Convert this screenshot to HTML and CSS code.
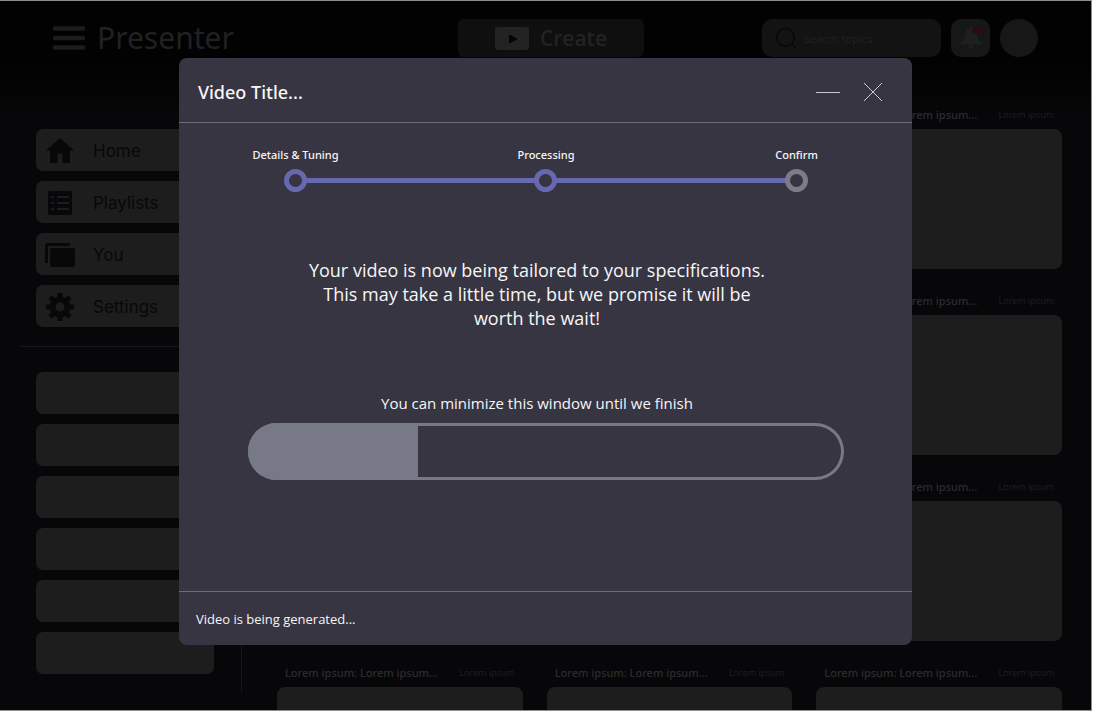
FILE: index.html
```html
<!DOCTYPE html>
<html lang="en">
<head>
    <meta charset="UTF-8">
    <meta name="viewport" content="width=device-width, initial-scale=1.0">
    <title>Presenter</title>
    <link rel="stylesheet" href="styles.css">
</head>
<body>
    <div class="app">
        <header class="topbar">
            <div class="brand">
                <button class="menu-button" aria-label="Menu">
                    <svg width="34" height="24" viewBox="0 0 34 24" stroke="currentColor" stroke-width="4.6" stroke-linecap="round">
                        <path d="M3 2.500h28M3 12h28M3 21.500h28"/>
                    </svg>
                </button>
                <h1>Presenter</h1>
            </div>
            <button class="create-button">
                <svg width="34" height="23" viewBox="0 0 34 23">
                    <rect width="34" height="23" rx="3" fill="#232323"/>
                    <path d="M14.500 8l7.500 4-7.500 4z" fill="#050505" stroke="#050505" stroke-linejoin="round"/>
                </svg>
                Create
            </button>
            <div class="tools">
                <label class="search">
                    <svg width="20" height="20" viewBox="0 0 20 20" fill="none" stroke="#070707" stroke-width="1.3">
                        <circle cx="9.500" cy="9.500" r="8.800"/>
                        <path d="M16 16l3.500 3.500"/>
                    </svg>
                    <input type="text" placeholder="Search topics" aria-label="Search topics">
                </label>
                <button class="bell-button" aria-label="Notifications">
                    <svg width="30" height="30" viewBox="0 0 30 30">
                        <path d="M15 3c-1 0-1.600.7-1.600 1.600C10 6 9 10 8.500 13.500c-.5 3-1.500 4.500-4.500 6.500v1.500h22V20c-3-2-4-3.500-4.500-6.500C21 10 20 6 16.600 4.600 16.600 3.700 16 3 15 3zM12.500 23h5a2.500 2.500 0 0 1-5 0z" fill="#1e1f20"/>
                        <rect x="16" y="4" width="14" height="7" rx="3.500" fill="#2b0c10"/>
                    </svg>
                </button>
                <button class="avatar" aria-label="Account"></button>
            </div>
        </header>

        <div class="layout">
            <aside class="sidebar">
                <nav class="nav-list">
                    <a href="#" class="nav-item">
                        <svg width="30" height="30" viewBox="0 0 30 30" fill="currentColor"><path d="M15 2L1 14.500h4V27h7.500v-9.500h5V27H25V14.500h4z"/></svg>
                        Home
                    </a>
                    <a href="#" class="nav-item">
                        <svg width="30" height="30" viewBox="0 0 30 30">
                            <rect x="3" y="3" width="24" height="24" rx="2" fill="currentColor"/>
                            <path d="M6 9h3M12 9h12M6 15h3M12 15h12M6 21h3M12 21h12" stroke="#1d1d1d" stroke-width="2"/>
                        </svg>
                        Playlists
                    </a>
                    <a href="#" class="nav-item">
                        <svg width="30" height="30" viewBox="0 0 30 30" fill="currentColor">
                            <path d="M0 5a2 2 0 0 1 2-2h23v3H3v17H0z"/>
                            <rect x="5" y="8" width="25" height="19" rx="2"/>
                        </svg>
                        You
                    </a>
                    <a href="#" class="nav-item">
                        <svg width="30" height="30" viewBox="0 0 30 30">
                            <circle cx="15" cy="15" r="7.500" fill="none" stroke="currentColor" stroke-width="6"/>
                            <path d="M15 1v6M15 23v6M1 15h6M23 15h6M5.100 5.100l4.200 4.200M20.700 20.700l4.200 4.200M5.100 24.900l4.200-4.200M20.700 9.300l4.200-4.200" stroke="currentColor" stroke-width="5"/>
                        </svg>
                        Settings
                    </a>
                </nav>
                <div class="nav-list channels">
                    <a href="#" class="nav-item" aria-label="Channel 1"></a>
                    <a href="#" class="nav-item" aria-label="Channel 2"></a>
                    <a href="#" class="nav-item" aria-label="Channel 3"></a>
                    <a href="#" class="nav-item" aria-label="Channel 4"></a>
                    <a href="#" class="nav-item" aria-label="Channel 5"></a>
                    <a href="#" class="nav-item" aria-label="Channel 6"></a>
                </div>
            </aside>

            <main class="video-grid" id="video-grid"></main>
        </div>

        <div class="overlay">
            <section class="modal" role="dialog" aria-labelledby="modal-title">
                <header class="modal-header">
                    <h2 id="modal-title">Video Title...</h2>
                    <div class="window-controls">
                        <button aria-label="Minimize">
                            <svg width="26" height="20" viewBox="0 0 26 20" stroke="currentColor"><path d="M1 10.500h24"/></svg>
                        </button>
                        <button aria-label="Close">
                            <svg width="20" height="20" viewBox="0 0 20 20" stroke="currentColor"><path d="M1 1l18 18M19 1L1 19"/></svg>
                        </button>
                    </div>
                </header>

                <div class="modal-body">
                    <ol class="steps">
                        <li class="step done">Details &amp; Tuning</li>
                        <li class="step done">Processing</li>
                        <li class="step">Confirm</li>
                    </ol>
                    <div class="messages">
                        <p class="message">Your video is now being tailored to your specifications. This may take a little time, but we promise it will be worth the wait!</p>
                        <label class="hint" for="generation">You can minimize this window until we finish</label>
                    </div>
                    <progress class="progress" id="generation" value="28.5" max="100"></progress>
                </div>

                <footer class="modal-footer">Video is being generated...</footer>
            </section>
        </div>
    </div>

    <script>
        const grid = document.getElementById('video-grid');

        for (let i = 0; i < 12; i++) {
            const card = document.createElement('article');
            // the modal lies over the first two columns of the top three rows
            const covered = i < 9 && i % 3 !== 2;
            card.className = 'video-card';
            card.innerHTML = `
                <div class="video-info">
                    ${covered ? '' : '<h3>Lorem ipsum: Lorem ipsum...</h3><span>Lorem ipsum</span>'}
                </div>
                <div class="thumbnail"></div>`;
            grid.appendChild(card);
        }
    </script>
</body>
</html>
```

FILE: styles.css
```css
*, *::before, *::after {
    box-sizing: border-box;
}
body {
    margin: 0;
    background-color: white;
    font-family: 'Open Sans', sans-serif;
}
h1, h2, h3, p, ol {
    margin: 0;
    padding: 0;
    font-weight: 400;
}
h1, h2, h3, .step {
    font-family: 'Noto Sans', sans-serif;
}
button {
    display: flex;
    align-items: center;
    justify-content: center;
    padding: 0;
    border: none;
    background: none;
    color: inherit;
    font-family: inherit;
    cursor: pointer;
}
svg {
    display: block;
    flex-shrink: 0;
}
.app {
    position: relative;
    height: calc(100vh - 3px);
    margin-right: 2px;
    overflow: hidden;
    border: 1px solid #8e8e90;
    border-left: none;
    background: linear-gradient(#020203 60px, #070709 120px);
}

/* Top bar */
.topbar {
    display: grid;
    grid-template-columns: 1fr 186px 394px;
    align-items: center;
    padding: 18px 53px 0 52px;
}
.brand {
    display: flex;
    align-items: center;
    gap: 11px;
    color: #1c1c1d;
}
.brand h1 {
    color: #212122;
    font-size: 30px;
    line-height: 38px;
}
.create-button {
    gap: 11px;
    height: 38px;
    border-radius: 6px;
    background-color: #0f0f10;
    color: #232323;
    font-size: 21px;
    font-weight: 600;
}
.tools {
    display: flex;
    justify-content: flex-end;
    gap: 10px;
}
.search {
    display: flex;
    align-items: center;
    gap: 8px;
    width: 179px;
    height: 38px;
    padding: 0 14px;
    border-radius: 10px;
    background-color: #131313;
}
.search input {
    width: 100%;
    padding: 0;
    border: none;
    outline: none;
    background: none;
    color: #212122;
    font-family: inherit;
    font-size: 11px;
}
.search input::placeholder {
    color: #212122;
}
.bell-button {
    width: 39px;
    height: 38px;
    border-radius: 10px;
    background-color: #161717;
}
.avatar {
    width: 38px;
    height: 38px;
    border-radius: 50%;
    background-color: #171717;
}

/* Page */
.layout {
    display: flex;
    gap: 35px;
    padding: 50px 29px 0 20px;
}
.sidebar {
    flex: 0 0 222px;
    height: 586px;
    padding-top: 22px;
    border-right: 1px solid #17171a;
}
.nav-list {
    display: flex;
    flex-direction: column;
    gap: 10px;
    padding: 0 27px 19px 16px;
}
.channels {
    padding-top: 25px;
    border-top: 1px solid #17171a;
}
.nav-item {
    display: flex;
    align-items: center;
    gap: 18px;
    height: 42px;
    padding: 2px 9px 0;
    border-radius: 7px;
    background-color: #1d1d1d;
    color: #08080a;
    font-family: 'Inter', sans-serif;
    font-size: 17px;
    text-decoration: none;
}
.video-grid {
    flex: 1;
    display: grid;
    grid-template-columns: repeat(3, 1fr);
    align-content: start;
    gap: 24px;
}
.video-info {
    display: flex;
    align-items: center;
    justify-content: space-between;
    height: 14px;
    margin-bottom: 8px;
    padding: 0 8px;
    white-space: nowrap;
}
.video-info h3 {
    color: #2c2c2e;
    font-size: 11px;
    font-weight: 500;
}
.video-info span {
    color: #1f1f21;
    font-size: 9px;
}
.thumbnail {
    height: 140px;
    border-radius: 8px;
    background-color: #1d1d1d;
}

/* Modal */
.overlay {
    position: absolute;
    inset: 0;
    display: flex;
    align-items: flex-start;
    justify-content: center;
    padding-top: 57px;
}
.modal {
    width: 67.2%;
    border-radius: 8px;
    background-color: #363541;
    color: #f6f6f8;
}
.modal-header {
    display: flex;
    align-items: center;
    justify-content: space-between;
    height: 65px;
    padding: 4px 29px 0 19px;
    border-bottom: 1px solid #6e6d77;
}
.modal-header h2 {
    font-size: 18px;
    font-weight: 500;
}
.window-controls {
    display: flex;
    gap: 22px;
    color: #c9c9cf;
}
.modal-body {
    height: 468px;
    padding: 24px 68px 0 69px;
}
.steps {
    position: relative;
    display: flex;
    justify-content: space-between;
    list-style: none;
}
/* line that joins the circles */
.steps::before {
    content: '';
    position: absolute;
    left: 48px;
    right: 48px;
    bottom: 9px;
    height: 5px;
    background-color: #6668b0;
}
.step {
    position: relative;
    display: flex;
    flex-direction: column;
    align-items: center;
    gap: 6px;
    width: 95px;
    font-size: 11px;
    font-weight: 500;
    line-height: 16px;
    white-space: nowrap;
}
.step::after {
    content: '';
    width: 23px;
    height: 23px;
    border: 5px solid #7c7b86;
    border-radius: 50%;
    background-color: #363541;
}
.step.done::after {
    border-color: #6668b0;
}
.messages {
    display: flex;
    flex-direction: column;
    align-items: center;
    gap: 61px;
    padding: 66px 18px 8px 0;
    line-height: 24px;
    text-align: center;
}
.message {
    max-width: 460px;
    font-size: 18px;
}
.hint {
    font-size: 15px;
}
.progress {
    display: block;
    appearance: none;
    width: 100%;
    height: 57px;
    overflow: hidden;
    border: none;
    border-radius: 29px;
    background: none;
    box-shadow: inset 0 0 0 3px #787986;
}
.progress::-webkit-progress-bar {
    background: none;
}
.progress::-webkit-progress-value {
    background-color: #787986;
}
.modal-footer {
    height: 54px;
    padding: 0 17px;
    border-top: 1px solid #6e6d77;
    font-size: 13px;
    line-height: 54px;
}
```
